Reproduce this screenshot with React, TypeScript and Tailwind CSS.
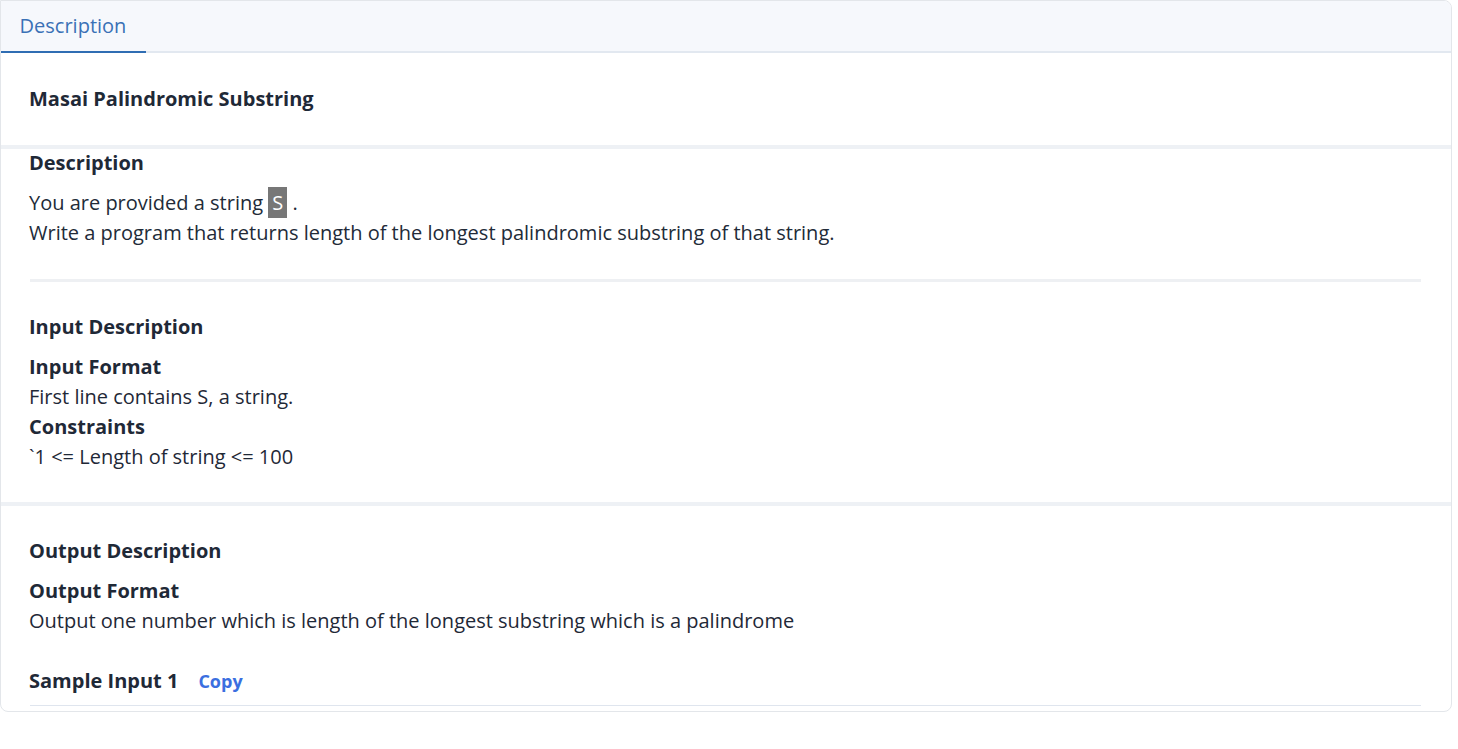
import React from "react";

// One problem statement card, clipped like the embedded viewer
const Heading: React.FC<{ children: React.ReactNode; className?: string }> = ({
  children,
  className = "",
}) => (
  <h3 className={`text-[20px] leading-[30px] font-bold text-[#1f2937] ${className}`}>
    {children}
  </h3>
);

const App: React.FC = () => {
  return (
    <div
      className="min-h-screen bg-white pr-[6px] text-[#1f2937]"
      style={{ fontFamily: '"Open Sans", "Noto Sans", sans-serif' }}
    >
      <div className="h-[712px] overflow-hidden rounded-b-lg rounded-tr-lg border border-[#e3e6ea] bg-white">
        {/* tabs */}
        <div className="flex h-[52px] border-b-2 border-[#e2e8f0] bg-[#f6f8fc]">
          <div className="-mb-[2px] flex w-[145px] items-center justify-center border-b-2 border-[#2f6db3] pr-[1px] text-[20px] text-[#3a71b6]">
            Description
          </div>
        </div>

        {/* title */}
        <div className="flex h-[92px] items-center px-[28px]">
          <h2 className="text-[20px] font-bold text-[#1f2937]">Masai Palindromic Substring</h2>
        </div>
        <div className="h-[4px] bg-[#eef1f5]" />

        {/* description */}
        <div className="pl-[28px] pr-[30px]">
          <Heading className="-mt-[1px]">Description</Heading>
          <div className="mt-[10px] text-[20px] leading-[30px] text-[#222b38]">
            <p>
              You are provided a string{" "}
              <code className="bg-[#777777] px-[4px] py-[2px] text-white" style={{ fontFamily: "inherit" }}>
                S
              </code>{" "}
              .
            </p>
            <p>Write a program that returns length of the longest palindromic substring of that string.</p>
          </div>
          <div className="ml-[1px] mt-[31px] h-[3px] bg-[#eef0f3]" />

          <Heading className="mt-[30px]">Input Description</Heading>
          <Heading className="mt-[10px]">Input Format</Heading>
          <p className="text-[20px] leading-[30px]">First line contains S, a string.</p>
          <Heading>Constraints</Heading>
          <p className="text-[20px] leading-[30px]">`1 &lt;= Length of string &lt;= 100</p>
        </div>
        <div className="mt-[30px] h-[4px] bg-[#eef1f5]" />

        {/* output */}
        <div className="pl-[28px] pr-[30px]">
          <Heading className="mt-[30px]">Output Description</Heading>
          <Heading className="mt-[10px]">Output Format</Heading>
          <p className="text-[20px] leading-[30px]">
            Output one number which is length of the longest substring which is a palindrome
          </p>
          <div className="mt-[30px] flex items-center gap-[20px]">
            <Heading>Sample Input 1</Heading>
            <button className="text-[18px] font-bold text-[#3b6fe0]">Copy</button>
          </div>
          <div className="ml-[1px] mt-[9px] h-[60px] border-t border-[#dfe5ee]" />
        </div>
      </div>
    </div>
  );
};

export default App;
